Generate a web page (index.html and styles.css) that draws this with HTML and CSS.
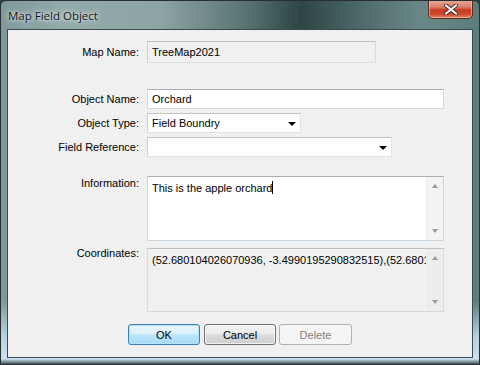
FILE: index.html
```html
<!DOCTYPE html>
<html>
<head>
<meta charset="utf-8">
<link rel="stylesheet" href="styles.css">
</head>
<body>
<div class="window">
  <div class="titlebar">
    <span class="title">Map Field Object</span>
    <div class="close">
      <svg width="14" height="11" viewBox="0 0 14 11">
        <path d="M2 1.5 L12 9.5 M12 1.5 L2 9.5" stroke="#4a2a24" stroke-width="4" stroke-linecap="round"/>
        <path d="M2 1.5 L12 9.5 M12 1.5 L2 9.5" stroke="#ffffff" stroke-width="2.2" stroke-linecap="round"/>
      </svg>
    </div>
  </div>
  <div class="client">
    <div class="row row-map">
      <label class="lbl">Map Name:</label>
      <div class="field disabled w-map">TreeMap2021</div>
    </div>
    <div class="row row-obj">
      <label class="lbl">Object Name:</label>
      <div class="field w-wide">Orchard</div>
    </div>
    <div class="row row-tight">
      <label class="lbl">Object Type:</label>
      <div class="field combo w-type">Field Boundry<span class="drop"></span></div>
    </div>
    <div class="row row-tight">
      <label class="lbl">Field Reference:</label>
      <div class="field combo w-ref"><span class="drop"></span></div>
    </div>
    <div class="row row-info">
      <label class="lbl lbl-info">Information:</label>
      <div class="area w-wide">
        <div class="area-text">This is the apple orchard<span class="caret"></span></div>
        <div class="scroll"><span class="up"></span><span class="down"></span></div>
      </div>
    </div>
    <div class="row row-coord">
      <label class="lbl lbl-coord">Coordinates:</label>
      <div class="area readonly w-wide coord">
        <div class="area-text nowrap">(52.680104026070936, -3.4990195290832515),(52.680104026070936, -3.4990195290832515)</div>
        <div class="scroll"><span class="up"></span><span class="down"></span></div>
      </div>
    </div>
    <div class="buttons">
      <div class="btn default">OK</div>
      <div class="btn">Cancel</div>
      <div class="btn disabledbtn">Delete</div>
    </div>
  </div>
</div>
</body>
</html>
```

FILE: styles.css
```css
html, body {
  margin: 0;
  padding: 0;
  background: #2f3f40;
}
body {
  font-family: "Liberation Sans", Arial, sans-serif;
  font-size: 11px;
  color: #000;
}
.window {
  width: 480px;
  height: 365px;
  box-sizing: border-box;
  border: 1px solid #27302f;
  border-radius: 6px 6px 0 0;
  background:
    linear-gradient(180deg, rgba(255,255,255,0) 0, rgba(255,255,255,0) 300px, rgba(190,215,235,0.9) 335px, rgba(205,225,240,1) 358px, rgba(40,50,55,1) 364px),
    linear-gradient(90deg, #7f9899 0, #93a9aa 60px, #8ea3a4 160px, #55706f 250px, #2d4544 300px, #4e6a6b 360px, #6b8888 420px, #5e7b7c 480px);
  display: flex;
  flex-direction: column;
  overflow: hidden;
}
.titlebar {
  height: 28px;
  display: flex;
  align-items: flex-start;
  justify-content: space-between;
  position: relative;
}
.title {
  font-family: "Open Sans", "Noto Sans", sans-serif;
  font-size: 11.5px;
  margin: 7px 0 0 7px;
  color: #0c1414;
  text-shadow: 0 0 6px rgba(255,255,255,0.9), 0 0 3px rgba(255,255,255,0.8);
}
.close {
  width: 45px;
  height: 19px;
  margin-right: 6px;
  margin-top: -1px;
  box-sizing: border-box;
  border: 1px solid #5a2a22;
  border-top: none;
  border-radius: 0 0 5px 5px;
  background: linear-gradient(180deg, #e8aa9c 0, #d87d6a 40%, #c43b22 55%, #cf4a2c 80%, #e48a64 100%);
  box-shadow: inset 0 0 0 1px rgba(255,220,210,0.5);
  display: flex;
  align-items: center;
  justify-content: center;
}
.close svg { display: block; }
.client {
  margin: 0 6px 0 6px;
  height: 329px;
  box-sizing: border-box;
  border: 1px solid #3a4a50;
  background: #f0f0f0;
  display: flex;
  flex-direction: column;
}
.row {
  display: flex;
  align-items: center;
}
.row-map { margin-top: 11px; }
.row-obj { margin-top: 26px; }
.row-tight { margin-top: 4px; }
.row-info { margin-top: 19px; align-items: flex-start; }
.row-coord { margin-top: 7px; align-items: flex-start; }
.lbl {
  width: 131px;
  margin-right: 8px;
  text-align: right;
  color: #000;
  line-height: 13px;
}
.lbl-info { padding-top: 1px; }
.lbl-coord { margin-top: -1px; }
.field {
  height: 20px;
  box-sizing: border-box;
  background: #fff;
  border: 1px solid #d5d9de;
  border-top-color: #abadb3;
  padding: 0 4px;
  display: flex;
  align-items: center;
  position: relative;
}
.disabled {
  height: 22px;
  background: #f0f0f0;
  border: 1px solid #dcdcdc;
  border-top-color: #bfbfbf;
  border-left-color: #d0d0d0;
}
.w-map { width: 229px; }
.w-wide { width: 297px; }
.w-type { width: 154px; }
.w-ref { width: 245px; }
.combo {
  border-color: #e2e3e4;
  border-top-color: #c4c4c4;
  border-left-color: #d0d0d0;
}
.drop {
  position: absolute;
  right: 4px;
  top: 8px;
  width: 0;
  height: 0;
  border-left: 4px solid transparent;
  border-right: 4px solid transparent;
  border-top: 4px solid #000;
}
.area {
  height: 65px;
  box-sizing: border-box;
  background: #fff;
  border: 1px solid #c6d6e2;
  border-top-color: #abadb3;
  display: flex;
}
.area.coord {
  height: 64px;
}
.readonly {
  background: #f0f0f0;
  border-color: #dadada;
  border-top-color: #c0c0c0;
}
.area-text {
  flex: 1;
  padding: 4px 0 0 4px;
  overflow: hidden;
  line-height: 13px;
}
.coord .area-text { padding-top: 5px; }
.nowrap { white-space: nowrap; }
.caret {
  display: inline-block;
  width: 1px;
  height: 13px;
  background: #000;
  vertical-align: -2px;
}
.scroll {
  width: 17px;
  background: #f3f3f3;
  border-left: 1px solid #ececec;
  display: flex;
  flex-direction: column;
  justify-content: space-between;
  align-items: center;
  padding: 7px 0 7px 0;
  box-sizing: border-box;
}
.readonly .scroll { background: #ededed; }
.up, .down {
  width: 0;
  height: 0;
  border-left: 3.5px solid transparent;
  border-right: 3.5px solid transparent;
}
.up { border-bottom: 4px solid #9a9a9a; }
.down { border-top: 4px solid #9a9a9a; }
.buttons {
  margin-top: 12px;
  padding-left: 120px;
  display: flex;
  gap: 4px;
}
.btn {
  width: 72px;
  height: 21px;
  box-sizing: border-box;
  border: 1px solid #707070;
  border-radius: 3px;
  background: linear-gradient(180deg, #f2f2f2 0, #ebebeb 50%, #dddddd 50%, #cfcfcf 100%);
  box-shadow: inset 0 0 0 1px rgba(255,255,255,0.7);
  display: flex;
  align-items: center;
  justify-content: center;
}
.btn.default {
  border-color: #3c7fb1;
  background: linear-gradient(180deg, #eaf6fd 0, #d9f0fc 50%, #bee6fd 50%, #a7d9f5 100%);
  box-shadow: inset 0 0 0 1px #b6e3fa;
}
.btn.disabledbtn {
  width: 73px;
  margin-left: -1px;
  border-color: #adb2b5;
  background: #f4f4f4;
  box-shadow: none;
  color: #838383;
}
```
